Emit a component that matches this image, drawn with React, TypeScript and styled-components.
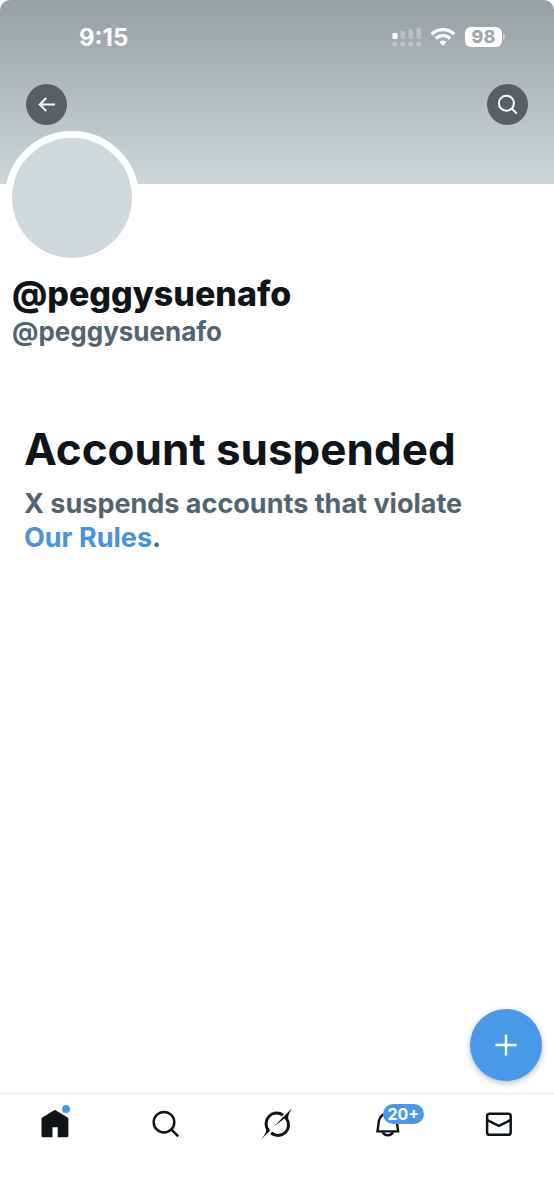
import React from "react";
import styled, { createGlobalStyle } from "styled-components";

const GlobalStyle = createGlobalStyle`
  *, *::before, *::after { box-sizing: border-box; }
  body {
    margin: 0;
    background: #fff;
    color: #0f1419;
    font-family: Inter, "Liberation Sans", sans-serif;
  }
  h1, h2, p { margin: 0; }
  button { border: 0; padding: 0; cursor: pointer; font: inherit; }
  svg { display: block; }
`;

const Screen = styled.div`
  position: relative;
  display: flex;
  flex-direction: column;
  min-height: 100vh;
`;

const Banner = styled.header`
  height: 184px;
  border-radius: 10px 10px 0 0;
  background: linear-gradient(#9aa1a4 0%, #a1a8ab 18%, #b9c1c4 60%, #cfd6da 100%);
`;

const StatusBar = styled.div`
  display: flex;
  align-items: center;
  justify-content: space-between;
  padding: 21px 49px 0 79px;
  color: #fff;
`;

const Clock = styled.time`
  font-size: 24px;
  line-height: 34px;
  font-weight: 700;
`;

const StatusIcons = styled.div`
  display: flex;
  align-items: center;
  gap: 9px;
  padding-bottom: 2px;
`;

const Battery = styled.div`
  display: flex;
  align-items: center;
  gap: 1px;

  &::after {
    content: "";
    width: 2px;
    height: 6px;
    border-radius: 0 2px 2px 0;
    background: #c9cdcf;
  }
`;

const BatteryLevel = styled.span`
  width: 37px;
  border-radius: 6px;
  background: #fff;
  color: #9fa5a8;
  font-size: 18px;
  line-height: 20px;
  font-weight: 800;
  text-align: center;
`;

const Toolbar = styled.div`
  display: flex;
  justify-content: space-between;
  padding: 29px 26px 0;
`;

const RoundButton = styled.button`
  display: grid;
  place-items: center;
  width: 41px;
  height: 41px;
  border-radius: 50%;
  background: #5b5f62;
  color: #fff;
`;

const Profile = styled.section`
  padding: 0 12px;
`;

const Avatar = styled.div`
  width: 134px;
  height: 134px;
  margin: -53px 0 0 -7px;
  border: 7px solid #fff;
  border-radius: 50%;
  background: #d0d8dc;
  background-clip: padding-box;
`;

const DisplayName = styled.h1`
  margin-top: 7px;
  font-size: 34px;
  line-height: 44px;
  font-weight: 800;
`;

const Handle = styled.p`
  color: #536471;
  font-size: 26px;
  line-height: 32px;
  font-weight: 700;
`;

const Notice = styled.main`
  flex: 1;
  padding: 73px 24px 0;
`;

const NoticeTitle = styled.h2`
  font-size: 44px;
  line-height: 56px;
  font-weight: 700;
`;

const NoticeText = styled.p`
  margin-top: 10px;
  color: #536471;
  font-size: 27px;
  line-height: 34px;
  font-weight: 700;
`;

const RulesLink = styled.a`
  display: inline-block;
  color: #4a93dc;
  text-decoration: none;
`;

const Footer = styled.footer`
  position: sticky;
  bottom: 0;
`;

const ComposeButton = styled.button`
  position: absolute;
  right: 12px;
  bottom: calc(100% + 12px);
  display: grid;
  place-items: center;
  width: 72px;
  height: 72px;
  border-radius: 50%;
  background: #4a99e9;
  color: #fff;
  box-shadow: 0 2px 6px rgba(0, 0, 0, 0.28);
`;

const TabBar = styled.nav`
  display: grid;
  grid-template-columns: repeat(5, 1fr);
  justify-items: center;
  padding: 12px 0 58px;
  border-top: 1px solid #e9ebec;
  background: #fff;
`;

const Tab = styled.a`
  position: relative;
  color: #0f1419;
`;

const Dot = styled.span`
  position: absolute;
  top: -1px;
  right: 3px;
  width: 8px;
  height: 8px;
  border-radius: 50%;
  background: #4a99e9;
`;

const CountBadge = styled.span`
  position: absolute;
  top: -2px;
  left: 13px;
  width: 41px;
  border-radius: 10px;
  background: #4a99e9;
  color: #fff;
  font-size: 16px;
  line-height: 20px;
  font-weight: 700;
  text-align: center;
`;

const Signal = () => (
  <svg width="29" height="20" viewBox="0 0 29 20" fill="#fff" aria-hidden="true">
    <rect x="0.5" y="6" width="5" height="6" rx="1.3" />
    <g fillOpacity="0.28">
      <rect x="8.5" y="4" width="4.5" height="8" rx="1" />
      <rect x="16.5" y="2.5" width="4.5" height="9.5" rx="1" />
      <rect x="24.5" y="0.5" width="4.5" height="11.5" rx="1" />
      <rect x="0.5" y="15" width="4.5" height="4.5" rx="1" />
      <rect x="8.5" y="15" width="4.5" height="4.5" rx="1" />
      <rect x="16.5" y="15" width="4.5" height="4.5" rx="1" />
      <rect x="24.5" y="15" width="4.5" height="4.5" rx="1" />
    </g>
  </svg>
);

const Wifi = () => (
  <svg width="26" height="20" viewBox="0 0 26 20" fill="none" stroke="#fff" aria-hidden="true">
    <path d="M1.7 7.3a16 16 0 0 1 22.6 0" strokeWidth="3.4" />
    <path d="M5.9 11.6a10 10 0 0 1 14.2 0" strokeWidth="3.4" />
    <path d="M13 18.8l-3.7-3.7a5.2 5.2 0 0 1 7.4 0z" fill="#fff" stroke="none" />
  </svg>
);

const BackArrow = () => (
  <svg width="20" height="20" viewBox="0 0 20 20" fill="none" stroke="currentColor" strokeWidth="1.9" aria-hidden="true">
    <path d="M18 9.5H3M9.2 3L2.7 9.5L9.2 16" />
  </svg>
);

const Magnifier = () => (
  <svg width="22" height="22" viewBox="0 0 22 22" fill="none" stroke="currentColor" strokeWidth="2" aria-hidden="true">
    <circle cx="9.4" cy="9.2" r="7.5" />
    <path d="M14.6 14.4l5.2 5.2" />
  </svg>
);

const Plus = () => (
  <svg width="22" height="22" viewBox="0 0 22 22" stroke="currentColor" strokeWidth="2.4" aria-hidden="true">
    <path d="M11 0.5v21M0.5 11h21" />
  </svg>
);

const TabIcon = ({ children }: { children: React.ReactNode }) => (
  <svg width="36" height="36" viewBox="0 0 36 36" fill="none" stroke="currentColor" strokeWidth="2.5" aria-hidden="true">
    {children}
  </svg>
);

export default function App() {
  return (
    <>
      <GlobalStyle />
      <Screen>
        <Banner>
          <StatusBar>
            <Clock>9:15</Clock>
            <StatusIcons>
              <Signal />
              <Wifi />
              <Battery>
                <BatteryLevel>98</BatteryLevel>
              </Battery>
            </StatusIcons>
          </StatusBar>
          <Toolbar>
            <RoundButton type="button" aria-label="Back">
              <BackArrow />
            </RoundButton>
            <RoundButton type="button" aria-label="Search profile">
              <Magnifier />
            </RoundButton>
          </Toolbar>
        </Banner>
        <Profile>
          <Avatar />
          <DisplayName>@peggysuenafo</DisplayName>
          <Handle>@peggysuenafo</Handle>
        </Profile>
        <Notice>
          <NoticeTitle>Account suspended</NoticeTitle>
          <NoticeText>
            X suspends accounts that violate <RulesLink href="#rules">Our Rules</RulesLink>.
          </NoticeText>
        </Notice>
        <Footer>
          <ComposeButton type="button" aria-label="New post">
            <Plus />
          </ComposeButton>
          <TabBar aria-label="Main">
            <Tab href="#home" aria-label="Home">
              <TabIcon>
                <path
                  d="M17.2 4.3a1.3 1.3 0 0 1 1.4 0l12 7.3c.5.3.8.8.8 1.4v17c0 .7-.5 1.2-1.2 1.2h-9.5V21.3h-5.2v9.9H5.7c-.7 0-1.2-.5-1.2-1.2V13c0-.6.3-1.1.8-1.4z"
                  fill="currentColor"
                  stroke="none"
                />
              </TabIcon>
              <Dot />
            </Tab>
            <Tab href="#search" aria-label="Search">
              <TabIcon>
                <circle cx="16" cy="16.2" r="10.3" />
                <path d="M23.2 23.4l7 7" />
              </TabIcon>
            </Tab>
            <Tab href="#grok" aria-label="Grok">
              <TabIcon>
                <path d="M9.6 24.6A10.6 10.6 0 0 1 24 9.2" strokeWidth="3" />
                <path d="M27.4 12.4A10.6 10.6 0 0 1 12.2 27" strokeWidth="3" />
                <path d="M14.2 21L33 2.3C30.6 6.2 29 9 29 13L26.2 13.8L25.4 12.4z" fill="currentColor" stroke="none" />
                <path d="M2 33.6C4.8 30.1 7 27.6 7.4 23.6L10.2 23.2L10.8 25z" fill="currentColor" stroke="none" />
              </TabIcon>
            </Tab>
            <Tab href="#notifications" aria-label="Notifications, more than 20 new">
              <TabIcon>
                <path d="M7.5 25.4l1.4-10.4a9 9 0 0 1 17.8 0l1.4 10.4z" strokeWidth="2.4" />
                <path d="M12.6 25.4a5.4 5.2 0 0 0 10.4 0" strokeWidth="2.6" />
              </TabIcon>
              <CountBadge>20+</CountBadge>
            </Tab>
            <Tab href="#messages" aria-label="Messages">
              <TabIcon>
                <rect x="6.1" y="7.8" width="23.6" height="21" rx="2.4" />
                <path d="M6.3 14.2l11.6 5.6 11.6-5.6" />
              </TabIcon>
            </Tab>
          </TabBar>
        </Footer>
      </Screen>
    </>
  );
}
